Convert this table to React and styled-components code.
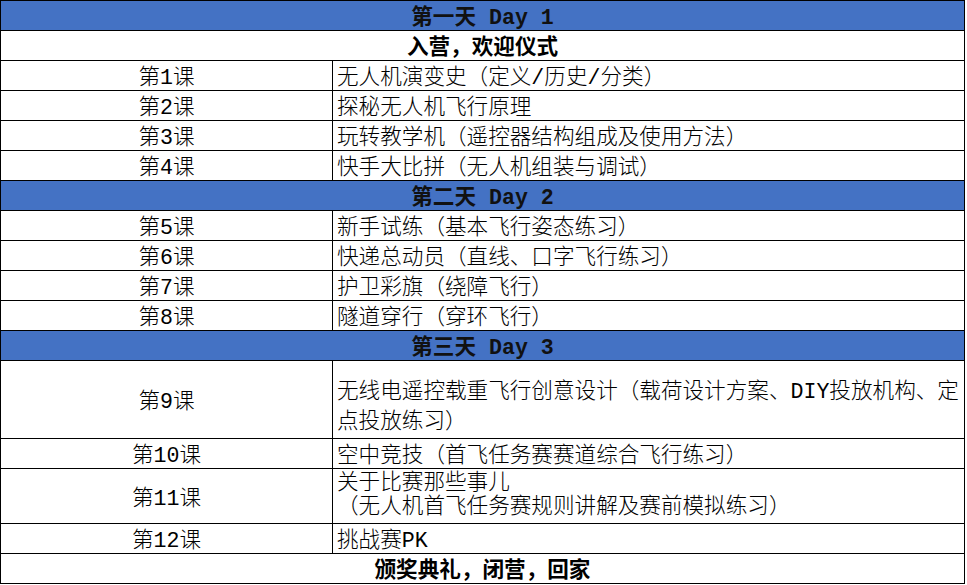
import React from "react";
import styled, { createGlobalStyle } from "styled-components";

const GlobalStyle = createGlobalStyle`
  html, body {
    margin: 0;
    padding: 0;
    background: #ffffff;
  }
  body {
    font-family: "Liberation Mono", "Noto Sans CJK SC", monospace;
    color: #000000;
  }
`;

const Sheet = styled.div`
  width: 965px;
  box-sizing: border-box;
  border-top: 1px solid #000;
  border-left: 1px solid #000;
  font-size: 21.6px;
  font-weight: 300;
`;

const Row = styled.div`
  display: flex;
  box-sizing: border-box;
  height: ${(p) => p.$h || 30}px;
  border-bottom: 1px solid #000;
  background: ${(p) => (p.$day ? "#4472c4" : "#ffffff")};
`;

// CJK glyphs from the fallback font sit ~2px high on the mono baseline,
// so cells carry a little extra top padding
const Banner = styled.div`
  flex: 1;
  box-sizing: border-box;
  display: flex;
  align-items: center;
  justify-content: center;
  padding-top: 5px;
  line-height: 24px;
  border-right: 1px solid #000;
  font-weight: 700;
  color: ${(p) => (p.$day ? "#111111" : "#000000")};
  white-space: pre;
`;

const LessonCell = styled.div`
  width: 332px;
  flex: none;
  box-sizing: border-box;
  display: flex;
  align-items: center;
  justify-content: center;
  padding-top: 5px;
  line-height: 24px;
  border-right: 1px solid #000;
`;

const TopicCell = styled.div`
  flex: 1;
  box-sizing: border-box;
  display: flex;
  flex-direction: column;
  justify-content: ${(p) => (p.$pt != null ? "flex-start" : "center")};
  padding: ${(p) => (p.$pt != null ? `${p.$pt}px 0 0 4px` : "5px 0 0 4px")};
  border-right: 1px solid #000;
  line-height: ${(p) => p.$lh || 24}px;
  white-space: nowrap;
`;

const rows = [
  { type: "day", text: "第一天 Day 1" },
  { type: "title", text: "入营，欢迎仪式" },
  { type: "lesson", no: "第1课", lines: ["无人机演变史（定义/历史/分类）"] },
  { type: "lesson", no: "第2课", lines: ["探秘无人机飞行原理"] },
  { type: "lesson", no: "第3课", lines: ["玩转教学机（遥控器结构组成及使用方法）"] },
  { type: "lesson", no: "第4课", lines: ["快手大比拼（无人机组装与调试）"] },
  { type: "day", text: "第二天 Day 2" },
  { type: "lesson", no: "第5课", lines: ["新手试练（基本飞行姿态练习）"] },
  { type: "lesson", no: "第6课", lines: ["快递总动员（直线、口字飞行练习）"] },
  { type: "lesson", no: "第7课", lines: ["护卫彩旗（绕障飞行）"] },
  { type: "lesson", no: "第8课", lines: ["隧道穿行（穿环飞行）"] },
  { type: "day", text: "第三天 Day 3" },
  {
    type: "lesson",
    no: "第9课",
    h: 78,
    lh: 30,
    pt: 16,
    lines: [
      "无线电遥控载重飞行创意设计（载荷设计方案、DIY投放机构、定",
      "点投放练习）",
    ],
  },
  { type: "lesson", no: "第10课", lines: ["空中竞技（首飞任务赛赛道综合飞行练习）"] },
  {
    type: "lesson",
    no: "第11课",
    h: 55,
    lh: 24,
    pt: 2,
    lines: ["关于比赛那些事儿", "（无人机首飞任务赛规则讲解及赛前模拟练习）"],
  },
  { type: "lesson", no: "第12课", lines: ["挑战赛PK"] },
  { type: "title", text: "颁奖典礼，闭营，回家" },
];

function App() {
  return (
    <>
      <GlobalStyle />
      <Sheet>
        {rows.map((r, i) => {
          if (r.type === "day") {
            return (
              <Row key={i} $day>
                <Banner $day>{r.text}</Banner>
              </Row>
            );
          }
          if (r.type === "title") {
            return (
              <Row key={i}>
                <Banner>{r.text}</Banner>
              </Row>
            );
          }
          return (
            <Row key={i} $h={r.h}>
              <LessonCell>{r.no}</LessonCell>
              <TopicCell $lh={r.lh} $pt={r.pt}>
                {r.lines.map((l, j) => (
                  <div key={j}>{l}</div>
                ))}
              </TopicCell>
            </Row>
          );
        })}
      </Sheet>
    </>
  );
}

export default App;
